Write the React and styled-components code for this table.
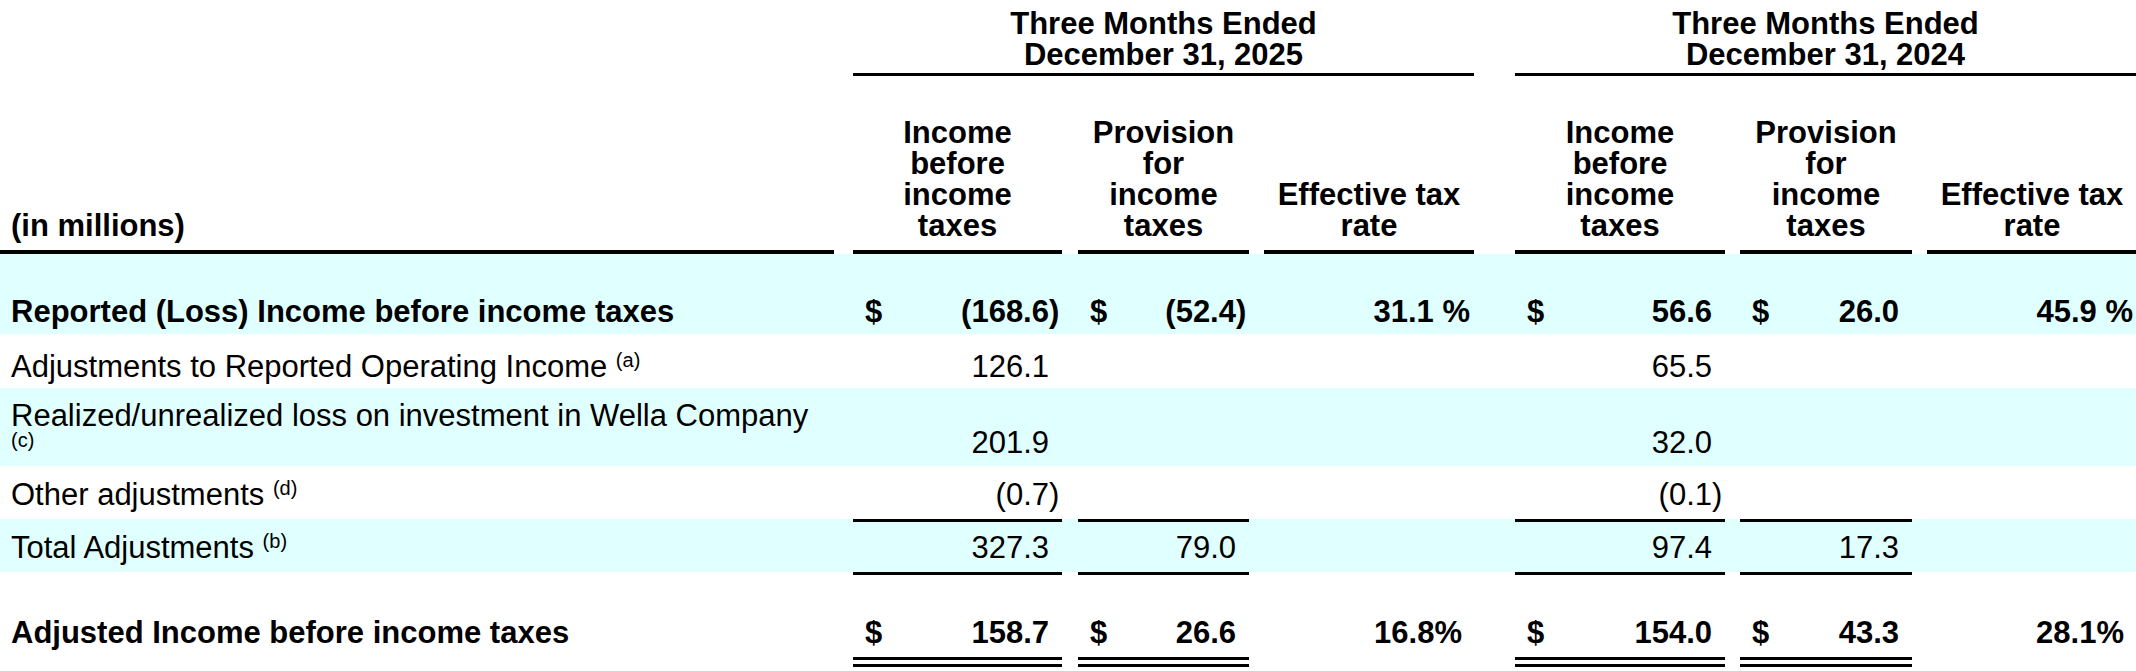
import React from "react";
import styled, { createGlobalStyle, css } from "styled-components";

// column tracks: label, then six value columns (each track = gutter + cell)
const COLS = "834px 228px 187px 225px 251px 187px 225px";

const GlobalStyle = createGlobalStyle`
  body {
    margin: 0;
    background: #fff;
    color: #000;
    font-family: "Liberation Sans", Arial, sans-serif;
    overflow: hidden;
  }
`;

const gutters = css`
  & > :nth-child(2) { margin-left: 19px; }
  & > :nth-child(3) { margin-left: 16px; }
  & > :nth-child(4) { margin-left: 15px; }
  & > :nth-child(5) { margin-left: 41px; }
  & > :nth-child(6) { margin-left: 15px; }
  & > :nth-child(7) { margin-left: 15px; }
`;

const Table = styled.div`
  width: 2137px;
  font-size: 31px;
`;

const GroupRow = styled.div`
  display: grid;
  grid-template-columns: 853px 621px 662px;
`;

const GroupTitle = styled.div`
  grid-column: ${(p) => p.$col};
  margin-left: ${(p) => p.$ml || 0}px;
  padding: 8px 0 3px;
  border-bottom: 3px solid #000;
  text-align: center;
  font-weight: bold;
  line-height: 31px;
`;

const HeadRow = styled.div`
  display: grid;
  grid-template-columns: ${COLS};
  align-items: end;
  padding-top: 41px;
  ${gutters}
`;

const HeadCell = styled.div`
  padding: 0 0 9px ${(p) => (p.$left ? "11px" : "0")};
  border-bottom: 4px solid #000;
  text-align: ${(p) => (p.$left ? "left" : "center")};
  font-weight: bold;
  line-height: 31px;
`;

const Row = styled.div`
  display: grid;
  grid-template-columns: ${COLS};
  align-items: end;
  background: ${(p) => (p.$band ? "#e0ffff" : "transparent")};
  ${gutters}
`;

const Label = styled.div`
  padding: ${(p) => p.$pt}px 0 ${(p) => p.$pb}px 11px;
  border-top: 3px solid transparent;
  border-bottom: ${(p) => (p.$double ? "10px double transparent" : "0")};
  line-height: ${(p) => p.$lh || 31}px;
  font-weight: ${(p) => (p.$bold ? "bold" : "normal")};
  white-space: nowrap;
`;

const Cell = styled.div`
  display: flex;
  justify-content: space-between;
  align-items: baseline;
  padding: ${(p) => p.$pt}px ${(p) => p.$pr}px ${(p) => p.$pb}px 12px;
  border-top: 3px solid ${(p) => (p.$rule ? "#000" : "transparent")};
  border-bottom: ${(p) =>
    p.$double ? `10px double ${p.$rule ? "#000" : "transparent"}` : "0"};
  line-height: 31px;
  font-weight: ${(p) => (p.$bold ? "bold" : "normal")};
  white-space: nowrap;
`;

const Value = styled.span`
  margin-left: auto;
`;

const Paren = styled.span`
  margin-right: -0.333em;
`;

const Sup = styled.sup`
  font-size: 20px;
  line-height: 0;
  vertical-align: ${(p) => (p.$low ? 7 : 10)}px;
`;

const rows = [
  {
    label: "Reported (Loss) Income before income taxes",
    bold: true,
    band: true,
    pt: 39,
    pb: 7,
    cells: [["$", "(168.6)"], ["$", "(52.4)"], [null, "31.1 %", 4], ["$", "56.6"], ["$", "26.0"], [null, "45.9 %", 4]],
  },
  {
    label: "Adjustments to Reported Operating Income",
    note: "(a)",
    pt: 14,
    pb: 6,
    cells: [[null, "126.1"], null, null, [null, "65.5"], null, null],
  },
  {
    label: "Realized/unrealized loss on investment in Wella Company",
    note: "(c)",
    breakNote: true,
    band: true,
    lh: 28,
    pt: 11,
    pb: 8,
    cells: [[null, "201.9"], null, null, [null, "32.0"], null, null],
  },
  {
    label: "Other adjustments",
    note: "(d)",
    pt: 10,
    pb: 9,
    cells: [[null, "(0.7)"], null, null, [null, "(0.1)"], null, null],
  },
  {
    label: "Total Adjustments",
    note: "(b)",
    band: true,
    pt: 10,
    pb: 9,
    rules: [0, 1, 3, 4],
    cells: [[null, "327.3"], [null, "79.0"], null, [null, "97.4"], [null, "17.3"], null],
  },
  {
    label: "Adjusted Income before income taxes",
    bold: true,
    double: true,
    pt: 42,
    pb: 9,
    rules: [0, 1, 3, 4],
    cells: [["$", "158.7"], ["$", "26.6"], [null, "16.8%", 12], ["$", "154.0"], ["$", "43.3"], [null, "28.1%", 13]],
  },
];

const Amount = ({ text }) => {
  if (text.startsWith("(")) {
    return (
      <Value>
        {text.slice(0, -1)}
        <Paren>)</Paren>
      </Value>
    );
  }
  return <Value>{text}</Value>;
};

const heads = [
  ["Income", "before", "income", "taxes"],
  ["Provision", "for", "income", "taxes"],
  ["Effective tax", "rate"],
];

const HeadLines = ({ lines }) => (
  <HeadCell>
    {lines.map((l, i) => (
      <div key={i}>{l}</div>
    ))}
  </HeadCell>
);

export default function App() {
  return (
    <>
      <GlobalStyle />
      <Table>
        <GroupRow>
          <GroupTitle $col={2}>
            Three Months Ended
            <br />
            December 31, 2025
          </GroupTitle>
          <GroupTitle $col={3} $ml={41}>
            Three Months Ended
            <br />
            December 31, 2024
          </GroupTitle>
        </GroupRow>

        <HeadRow>
          <HeadCell $left>(in millions)</HeadCell>
          {[...heads, ...heads].map((h, i) => (
            <HeadLines key={i} lines={h} />
          ))}
        </HeadRow>

        {rows.map((r, ri) => (
          <Row key={ri} $band={r.band}>
            <Label $pt={r.pt} $pb={r.pb} $lh={r.lh} $bold={r.bold} $double={r.double}>
              {r.label}
              {r.note && (r.breakNote ? <br /> : " ")}
              {r.note && <Sup $low={r.breakNote}>{r.note}</Sup>}
            </Label>
            {r.cells.map((c, ci) => (
              <Cell
                key={ci}
                $pt={r.pt}
                $pb={r.pb}
                $pr={c && c[2] != null ? c[2] : 13}
                $bold={r.bold}
                $double={r.double}
                $rule={r.rules && r.rules.includes(ci)}
              >
                {c && c[0] && <span>{c[0]}</span>}
                {c && <Amount text={c[1]} />}
              </Cell>
            ))}
          </Row>
        ))}
      </Table>
    </>
  );
}
